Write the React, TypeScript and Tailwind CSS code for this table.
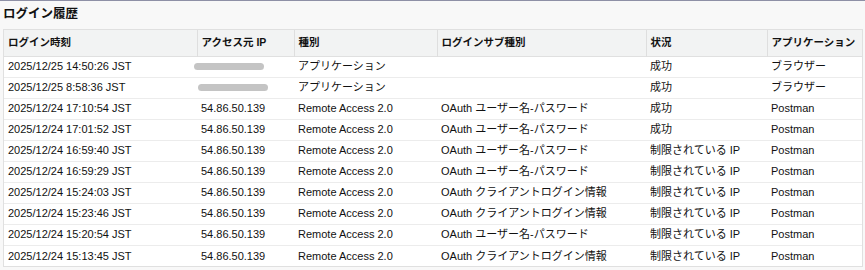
const rows = [
  { time: "2025/12/25 14:50:26 JST", ip: null, type: "アプリケーション", sub: "", status: "成功", app: "ブラウザー" },
  { time: "2025/12/25 8:58:36 JST", ip: null, type: "アプリケーション", sub: "", status: "成功", app: "ブラウザー" },
  { time: "2025/12/24 17:10:54 JST", ip: "54.86.50.139", type: "Remote Access 2.0", sub: "OAuth ユーザー名-パスワード", status: "成功", app: "Postman" },
  { time: "2025/12/24 17:01:52 JST", ip: "54.86.50.139", type: "Remote Access 2.0", sub: "OAuth ユーザー名-パスワード", status: "成功", app: "Postman" },
  { time: "2025/12/24 16:59:40 JST", ip: "54.86.50.139", type: "Remote Access 2.0", sub: "OAuth ユーザー名-パスワード", status: "制限されている IP", app: "Postman" },
  { time: "2025/12/24 16:59:29 JST", ip: "54.86.50.139", type: "Remote Access 2.0", sub: "OAuth ユーザー名-パスワード", status: "制限されている IP", app: "Postman" },
  { time: "2025/12/24 15:24:03 JST", ip: "54.86.50.139", type: "Remote Access 2.0", sub: "OAuth クライアントログイン情報", status: "制限されている IP", app: "Postman" },
  { time: "2025/12/24 15:23:46 JST", ip: "54.86.50.139", type: "Remote Access 2.0", sub: "OAuth クライアントログイン情報", status: "制限されている IP", app: "Postman" },
  { time: "2025/12/24 15:20:54 JST", ip: "54.86.50.139", type: "Remote Access 2.0", sub: "OAuth ユーザー名-パスワード", status: "制限されている IP", app: "Postman" },
  { time: "2025/12/24 15:13:45 JST", ip: "54.86.50.139", type: "Remote Access 2.0", sub: "OAuth クライアントログイン情報", status: "制限されている IP", app: "Postman" },
]

const headers = ["ログイン時刻", "アクセス元 IP", "種別", "ログインサブ種別", "状況", "アプリケーション"]

export default function App() {
  return (
    <div
      className="w-[865px] h-[270px] bg-[#f8f8f8] border-t border-[#8e90a6] overflow-hidden text-[#111]"
      style={{ fontFamily: '"Liberation Sans", "Noto Sans CJK JP", sans-serif' }}
    >
      <h2 className="pl-[3px] pt-[4px] h-[28px] text-[12.5px] font-bold leading-[18px]">ログイン履歴</h2>

      {/* Table */}
      <div className="ml-[3px] mr-[2px] bg-white border border-[#e0e0e0]">
        <table className="w-full table-fixed border-collapse text-[11px]">
          <colgroup>
            <col className="w-[193px]" />
            <col className="w-[97px]" />
            <col className="w-[143px]" />
            <col className="w-[209px]" />
            <col className="w-[121px]" />
            <col />
          </colgroup>
          <thead>
            <tr className="h-[26px] bg-[#f2f3f3] border-b border-[#e0e0e0]">
              {headers.map((h, i) => (
                <th
                  key={h}
                  className={`text-left font-bold px-[4px] text-[10.5px] ${
                    i > 0 ? "border-l border-[#dedede]" : ""
                  }`}
                >
                  {h}
                </th>
              ))}
            </tr>
          </thead>
          <tbody>
            {rows.map((r, i) => (
              <tr key={i} className="h-[21px] border-b border-[#ececec] last:border-b-0">
                <td className="pl-[4px] whitespace-nowrap">{r.time}</td>
                <td className="pl-[4px] whitespace-nowrap">
                  {r.ip ?? (
                    <div
                      className={`h-[7px] w-[70px] rounded-full bg-[#c4c4c4] blur-[0.6px] ${
                        i === 0 ? "-ml-[7px]" : "-ml-[3px]"
                      }`}
                    />
                  )}
                </td>
                <td className="pl-[4px] whitespace-nowrap">{r.type}</td>
                <td className="pl-[4px] whitespace-nowrap">{r.sub}</td>
                <td className="pl-[4px] whitespace-nowrap">{r.status}</td>
                <td className="pl-[4px] whitespace-nowrap">{r.app}</td>
              </tr>
            ))}
          </tbody>
        </table>
      </div>
    </div>
  )
}
